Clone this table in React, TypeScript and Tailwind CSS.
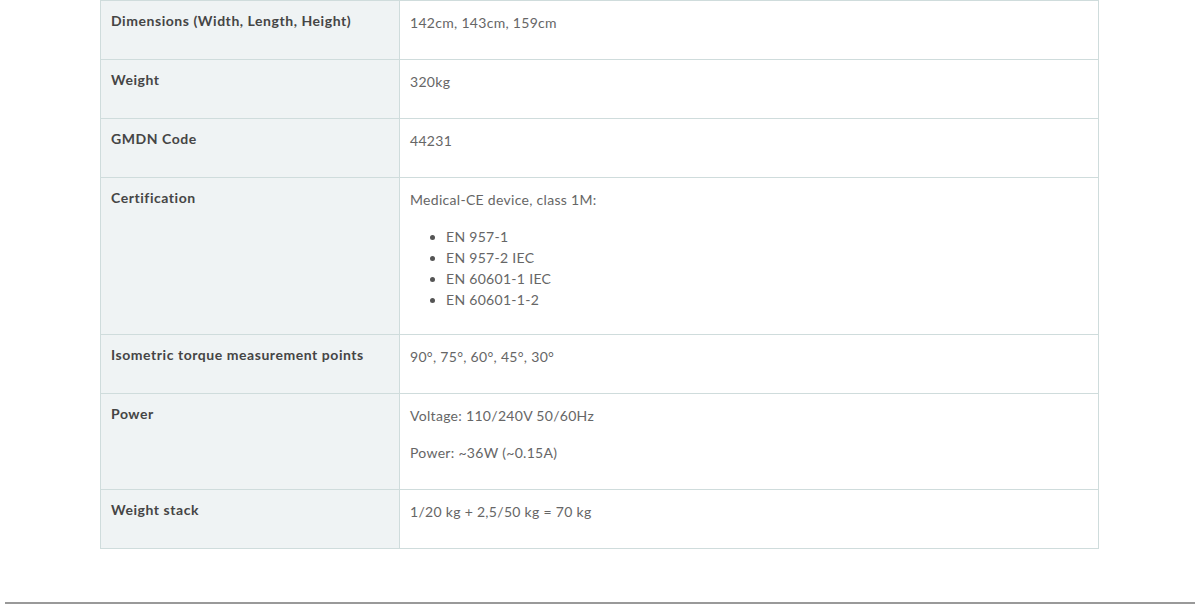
const rows: { label: string; values: (string | string[])[] }[] = [
  { label: "Dimensions (Width, Length, Height)", values: ["142cm, 143cm, 159cm"] },
  { label: "Weight", values: ["320kg"] },
  { label: "GMDN Code", values: ["44231"] },
  {
    label: "Certification",
    values: ["Medical-CE device, class 1M:", ["EN 957-1", "EN 957-2 IEC", "EN 60601-1 IEC", "EN 60601-1-2"]],
  },
  { label: "Isometric torque measurement points", values: ["90°, 75°, 60°, 45°, 30°"] },
  { label: "Power", values: ["Voltage: 110/240V 50/60Hz", "Power: ~36W (~0.15A)"] },
  { label: "Weight stack", values: ["1/20 kg + 2,5/50 kg = 70 kg"] },
];

export default function App() {
  return (
    <div className="min-h-[605px] w-[1200px] bg-white font-['Lato','Noto_Sans',sans-serif] text-[14px]">
      <div className="pl-[100px]">
        <table className="w-[999px] border-collapse">
          <tbody>
            {rows.map((r) => (
              <tr key={r.label}>
                <td className="w-[299px] border border-[#cfdcdc] bg-[#eff3f4] px-[10px] pt-[9px] pb-[11px] align-top">
                  <p className="mb-[16px] leading-[22px] font-bold tracking-[0.55px] text-[#454545]">{r.label}</p>
                </td>
                <td className="border border-[#cfdcdc] px-[10px] pt-[11px] pb-[10px] align-top tracking-[0.3px] text-[#666]">
                  {r.values.map((v, i) =>
                    typeof v === "string" ? (
                      <p key={i} className="mb-[15px] leading-[22px]">{v}</p>
                    ) : (
                      <ul key={i} className="mb-[14px] list-disc pl-[36px] leading-[21px] marker:text-[#555]">
                        {v.map((it) => (
                          <li key={it}>{it}</li>
                        ))}
                      </ul>
                    )
                  )}
                </td>
              </tr>
            ))}
          </tbody>
        </table>
      </div>
      <div className="mx-[5px] mt-[53px] h-[2px] bg-[#999]" />
    </div>
  );
}
